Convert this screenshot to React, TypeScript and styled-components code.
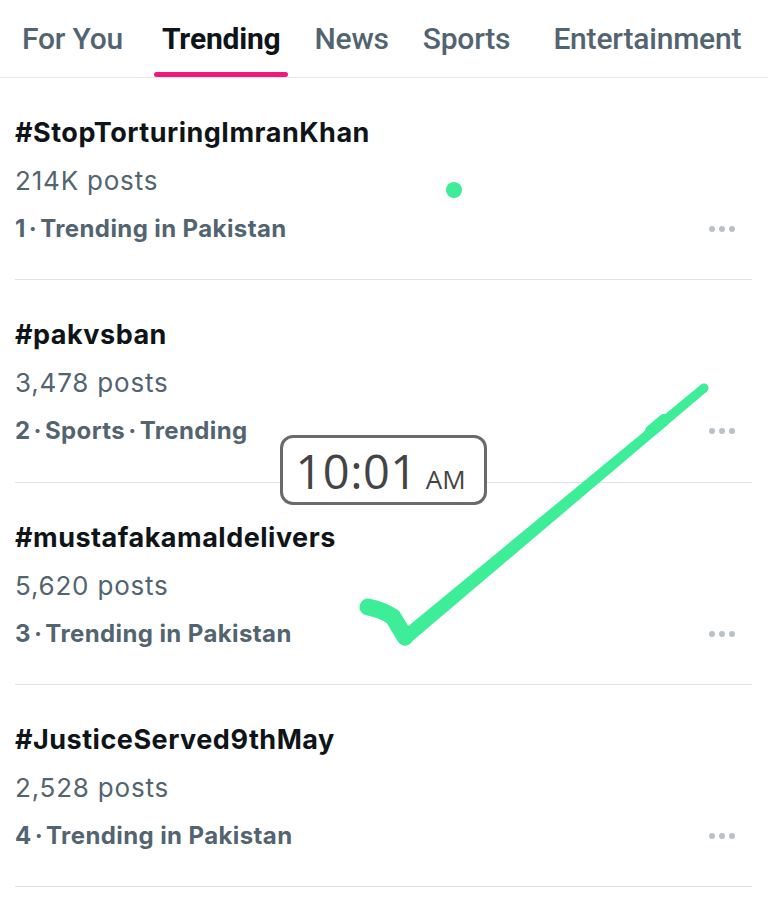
import React from "react";
import styled, { createGlobalStyle } from "styled-components";

const Global = createGlobalStyle`
  html, body { margin: 0; padding: 0; background: #ffffff; }
  body { font-family: Inter, Roboto, "Liberation Sans", sans-serif; -webkit-font-smoothing: antialiased; }
`;

const Page = styled.div`
  position: relative;
  width: 768px;
  height: 917px;
  overflow: hidden;
  background: #fff;
`;

const TabBar = styled.nav`
  display: flex;
  height: 77px;
  border-bottom: 1px solid #e3e7ea;
  padding-left: 22px;
  font-family: Roboto, "Liberation Sans", sans-serif;
`;

const Tab = styled.div<{ $active?: boolean; $gap: number }>`
  position: relative;
  margin-left: ${(p) => p.$gap}px;
  height: 77px;
  box-sizing: border-box;
  padding-top: 21px;
  font-size: 30px;
  line-height: 36px;
  font-weight: ${(p) => (p.$active ? 700 : 500)};
  color: ${(p) => (p.$active ? "#0f1419" : "#536471")};
  letter-spacing: -0.2px;
  white-space: nowrap;
`;

const Underline = styled.span`
  position: absolute;
  bottom: 0;
  left: 50%;
  transform: translateX(-50%);
  width: 134px;
  height: 5px;
  border-radius: 3px;
  background: #f0197b;
`;

const List = styled.div`
  display: flex;
  flex-direction: column;
  padding: 0 16px 0 15px;
`;

const Item = styled.div`
  display: grid;
  grid-template-columns: 1fr auto;
  padding: 31px 17px 27px 0;
  border-bottom: 1px solid #dfe3e6;
  height: 143.3px;
`;

const Texts = styled.div`
  display: flex;
  flex-direction: column;
`;

const Title = styled.div`
  font-size: 27px;
  line-height: 48px;
  font-weight: 700;
  color: #0f1419;
  letter-spacing: 0.5px;
`;

const Posts = styled.div`
  font-size: 26px;
  line-height: 48px;
  font-weight: 400;
  color: #536471;
  letter-spacing: 0.8px;
`;

const Meta = styled.div`
  font-size: 24px;
  line-height: 48px;
  font-weight: 700;
  color: #536471;
  letter-spacing: 0.4px;
`;

const Sep = styled.span`
  color: #536471;
  padding: 0 3px;
  font-weight: 700;
`;

const More = styled.div`
  align-self: end;
  display: flex;
  gap: 4px;
  height: 48px;
  align-items: center;
`;

const MoreDot = styled.span`
  width: 6px;
  height: 6px;
  border-radius: 50%;
  background: #b9c1c8;
`;

const TimeBadge = styled.div`
  position: absolute;
  left: 280px;
  top: 435px;
  width: 207px;
  height: 70px;
  box-sizing: border-box;
  border: 3px solid #6a6a6a;
  border-radius: 13px;
  background: #fff;
  display: flex;
  align-items: baseline;
  justify-content: center;
  gap: 8px;
  padding-top: 4px;
  padding-right: 6px;
  font-family: "Open Sans", "DejaVu Sans", sans-serif;
  color: #444;
`;

const Clock = styled.span`
  font-size: 47px;
  line-height: 58px;
  font-weight: 400;
  letter-spacing: 0.5px;
`;

const Meridiem = styled.span`
  font-size: 26px;
  font-weight: 400;
`;

const Markup = styled.svg`
  position: absolute;
  left: 0;
  top: 0;
  pointer-events: none;
`;

type Trend = { tag: string; posts: string; meta: string[] };

const trends: Trend[] = [
  { tag: "#StopTorturingImranKhan", posts: "214K posts", meta: ["1", "Trending in Pakistan"] },
  { tag: "#pakvsban", posts: "3,478 posts", meta: ["2", "Sports", "Trending"] },
  { tag: "#mustafakamaldelivers", posts: "5,620 posts", meta: ["3", "Trending in Pakistan"] },
  { tag: "#JusticeServed9thMay", posts: "2,528 posts", meta: ["4", "Trending in Pakistan"] },
];

const tabs = [
  { label: "For You", gap: 0 },
  { label: "Trending", gap: 39, active: true },
  { label: "News", gap: 34 },
  { label: "Sports", gap: 34 },
  { label: "Entertainment", gap: 43 },
];

const GREEN = "#3ded98";

export default function App() {
  return (
    <Page>
      <Global />
      <TabBar>
        {tabs.map((t) => (
          <Tab key={t.label} $active={t.active} $gap={t.gap}>
            {t.label}
            {t.active && <Underline />}
          </Tab>
        ))}
      </TabBar>
      <List>
        {trends.map((t) => (
          <Item key={t.tag}>
            <Texts>
              <Title>{t.tag}</Title>
              <Posts>{t.posts}</Posts>
              <Meta>
                {t.meta.map((m, i) => (
                  <React.Fragment key={m}>
                    {i > 0 && <Sep>·</Sep>}
                    {m}
                  </React.Fragment>
                ))}
              </Meta>
            </Texts>
            <More>
              <MoreDot />
              <MoreDot />
              <MoreDot />
            </More>
          </Item>
        ))}
      </List>
      <TimeBadge>
        <Clock>10:01</Clock>
        <Meridiem>AM</Meridiem>
      </TimeBadge>
      <Markup width="768" height="917" viewBox="0 0 768 917">
        <circle cx="454" cy="190" r="8" fill={GREEN} />
        <path
          d="M368 607 Q383 610 393 617 L405 637"
          fill="none"
          stroke={GREEN}
          strokeWidth="17"
          strokeLinecap="round"
          strokeLinejoin="round"
        />
        <polygon points="400.5,632.6 701.1,384.5 706.9,391.5 409.5,643.4" fill={GREEN} />
        <circle cx="405" cy="638" r="7.5" fill={GREEN} />
        <circle cx="704" cy="388" r="4.5" fill={GREEN} />
        <path d="M651 431 L664 420" stroke={GREEN} strokeWidth="12" strokeLinecap="round" />
      </Markup>
    </Page>
  );
}
